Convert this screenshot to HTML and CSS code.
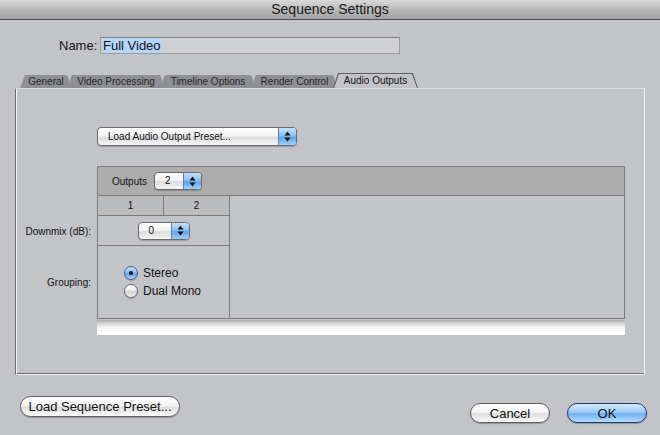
FILE: index.html
```html
<!DOCTYPE html>
<html lang="en">
<head>
  <meta charset="UTF-8">
  <title>Sequence Settings</title>
  <link rel="stylesheet" href="styles.css">
</head>
<body>

<div class="window">
  <div class="titlebar">Sequence Settings</div>

  <!-- Name field -->
  <div class="name-row">
    <label for="seq-name">Name:</label>
    <div class="textfield" id="seq-name"><span class="selected">Full Video</span></div>
  </div>

  <!-- Tabs -->
  <div class="tabs">
    <div class="tab tab-general">General</div>
    <div class="tab tab-video">Video Processing</div>
    <div class="tab tab-timeline">Timeline Options</div>
    <div class="tab tab-render">Render Control</div>
    <div class="tab tab-active"><span>Audio Outputs</span></div>
  </div>

  <div class="pane">
    <div class="popup popup-preset">
      <div class="popup-label">Load Audio Output Preset...</div>
      <div class="popup-arrows">
        <svg width="7" height="11" viewBox="0 0 7 11"><path d="M3.5 0.5L6.5 4.5H0.5Z M3.5 10.5L0.5 6.5H6.5Z" fill="#111"/></svg>
      </div>
    </div>

    <div class="mixer">
      <div class="row-labels">
        <div class="label-spacer"></div>
        <div class="row-label row-downmix">Downmix (dB):</div>
        <div class="row-label row-grouping">Grouping:</div>
      </div>

      <div class="mixer-table">
        <div class="mixer-head">
          <span>Outputs</span>
          <div class="popup popup-small">
            <div class="popup-label">2</div>
            <div class="popup-arrows">
              <svg width="7" height="11" viewBox="0 0 7 11"><path d="M3.5 0.5L6.5 4.5H0.5Z M3.5 10.5L0.5 6.5H6.5Z" fill="#111"/></svg>
            </div>
          </div>
        </div>
        <div class="mixer-body">
          <div class="cell col-head">1</div>
          <div class="cell col-head col-2">2</div>
          <div class="cell empty"></div>
          <div class="cell downmix">
            <div class="popup popup-small popup-db">
              <div class="popup-label">0</div>
              <div class="popup-arrows">
                <svg width="7" height="11" viewBox="0 0 7 11"><path d="M3.5 0.5L6.5 4.5H0.5Z M3.5 10.5L0.5 6.5H6.5Z" fill="#111"/></svg>
              </div>
            </div>
          </div>
          <div class="cell grouping">
            <div class="radio"><span class="radio-dot checked"></span>Stereo</div>
            <div class="radio"><span class="radio-dot"></span>Dual Mono</div>
          </div>
        </div>
      </div>
    </div>

    <div class="scroll-strip"></div>
  </div>

  <div class="footer">
    <button class="aqua btn-load">Load Sequence Preset...</button>
    <div class="footer-right">
      <button class="aqua btn-cancel">Cancel</button>
      <button class="aqua aqua-default btn-ok">OK</button>
    </div>
  </div>
</div>

</body>
</html>
```

FILE: styles.css
```css
body {
  margin: 0;
  padding: 0;
  font-family: "Liberation Sans", Arial, sans-serif;
  color: #111;
}
.window {
  width: 660px;
  height: 435px;
  background-color: #c3c4c8;
  overflow: hidden;
}
.titlebar {
  height: 19px;
  line-height: 19px;
  text-align: center;
  font-size: 14px;
  color: #1a1a1a;
  background: linear-gradient(#dadada, #b9b9b9 50%, #a3a3a3);
  border-bottom: 1px solid #4d4d4d;
}

/* Name row */
.name-row {
  display: flex;
  align-items: center;
  margin-top: 17px;
  padding-left: 59px;
  font-size: 13px;
}
.name-row label {
  width: 41px;
}
.textfield {
  width: 296px;
  height: 15px;
  line-height: 15px;
  padding-left: 2px;
  background-color: #cfd0d3;
  border: 1px solid #9c9c9c;
  border-top-color: #7e7e7e;
}
.selected {
  background-color: #b5d5fe;
}

/* Tabs */
.tabs {
  display: flex;
  align-items: flex-end;
  margin-top: 19px;
  padding-left: 20px;
  height: 15px;
}
.tab {
  height: 13px;
  line-height: 14px;
  margin-right: -5px;
  text-align: center;
  font-size: 10px;
  color: #262626;
  background-color: #8f9095;
  clip-path: polygon(5px 0, calc(100% - 5px) 0, 100% 100%, 0 100%);
}
.tab-general { width: 52px; }
.tab-video { width: 98px; }
.tab-timeline { width: 96px; }
.tab-render { width: 87px; }
.tab-active {
  position: relative;
  width: 85px;
  height: 15px;
  line-height: 15px;
  margin-right: 0;
  background-color: #5f5f5f;
  color: #111;
}
.tab-active::before {
  content: "";
  position: absolute;
  top: 1px;
  left: 1px;
  right: 1px;
  bottom: 0;
  background-color: #c3c4c8;
  clip-path: polygon(5px 0, calc(100% - 5px) 0, 100% 100%, 0 100%);
}
.tab-active span {
  position: relative;
}

/* Tab pane */
.pane {
  margin: 0 15px;
  height: 247px;
  padding: 38px 0 0 81px;
  border-top: 1px solid #dedfe2;
  border-left: 1px solid #6c6c6c;
  border-right: 1px solid #f4f4f4;
  border-bottom: 1px solid #f4f4f4;
  box-shadow: inset 1px 0 #f4f4f4, inset 0 -1px #6c6c6c;
}

/* Aqua popup menus */
.popup {
  display: flex;
  height: 16px;
  border: 1px solid #6b6b6b;
  border-radius: 4px;
  background: linear-gradient(#ffffff, #f2f2f2 45%, #dcdcdc 55%, #f6f6f6);
  box-shadow: 0 1px 1px rgba(0, 0, 0, 0.2);
  overflow: hidden;
  font-size: 10px;
}
.popup-label {
  flex: 1;
  line-height: 16px;
  padding-left: 10px;
}
.popup-arrows {
  width: 17px;
  display: flex;
  align-items: center;
  justify-content: center;
  border-left: 1px solid #5a7fb8;
  background: linear-gradient(#c6e1fb, #8cc0f2 45%, #5fa4e8 55%, #9fd0fa);
}
.popup-preset {
  width: 198px;
  height: 17px;
}
.popup-preset .popup-label {
  line-height: 17px;
}
.popup-small {
  width: 46px;
}
.popup-db {
  width: 50px;
}

/* Mixer table */
.mixer {
  display: flex;
  margin-top: 20px;
  margin-left: -81px;
}
.row-labels {
  width: 81px;
  font-size: 10px;
}
.label-spacer {
  height: 50px;
}
.row-label {
  display: flex;
  align-items: center;
  justify-content: flex-end;
  padding-right: 6px;
}
.row-downmix {
  height: 30px;
}
.row-grouping {
  height: 73px;
}
.mixer-table {
  width: 526px;
  border: 1px solid #7b7b7b;
}
.mixer-head {
  display: flex;
  align-items: center;
  gap: 7px;
  height: 28px;
  padding-left: 14px;
  font-size: 10px;
  background-color: #adadad;
  border-bottom: 1px solid #7b7b7b;
}
.mixer-body {
  display: grid;
  grid-template-columns: 65px 65px 1fr;
  grid-template-rows: 19px 29px 71px;
  gap: 1px;
  background-color: #7b7b7b;
}
.cell {
  background-color: #c3c4c8;
}
.col-head {
  background-color: #bbbcbe;
  font-size: 10px;
  line-height: 19px;
  text-align: center;
}
.empty {
  grid-column: 3;
  grid-row: 1 / 4;
}
.downmix {
  grid-column: 1 / 3;
  display: flex;
  align-items: center;
  justify-content: center;
}
.grouping {
  grid-column: 1 / 3;
  display: flex;
  flex-direction: column;
  justify-content: center;
  padding-left: 26px;
}
.radio {
  display: flex;
  align-items: center;
  height: 18px;
  font-size: 12px;
}
.radio-dot {
  width: 12px;
  height: 12px;
  margin-right: 5px;
  border: 1px solid #6b6b6b;
  border-radius: 50%;
  background: linear-gradient(#ffffff, #e9e9e9 50%, #d2d2d2 55%, #f4f4f4);
  box-shadow: 0 1px 1px rgba(0, 0, 0, 0.2);
  display: flex;
  align-items: center;
  justify-content: center;
}
.radio-dot.checked {
  border-color: #44619a;
  background: linear-gradient(#c9e3fb, #8cc0f2 45%, #5fa4e8 55%, #a6d4fb);
}
.radio-dot.checked::after {
  content: "";
  width: 4px;
  height: 4px;
  border-radius: 50%;
  background-color: #111;
}
.scroll-strip {
  width: 528px;
  height: 15px;
  margin-top: 1px;
  background: linear-gradient(#adadad, #d9d9d9 25%, #f5f5f5 50%, #ffffff);
}

/* Bottom buttons */
.footer {
  display: flex;
  justify-content: space-between;
  padding: 21px 13px 0 20px;
}
.footer-right {
  display: flex;
  gap: 17px;
  margin-top: 7px;
}
.aqua {
  height: 21px;
  padding: 0;
  font-family: "Liberation Sans", Arial, sans-serif;
  font-size: 13px;
  color: #111;
  border: 1px solid #5e5e5e;
  border-radius: 11px;
  background: linear-gradient(#ffffff, #f3f3f3 45%, #dedede 55%, #fafafa);
  box-shadow: 0 1px 1px rgba(0, 0, 0, 0.25);
}
.btn-load {
  width: 160px;
}
.btn-cancel, .btn-ok {
  width: 80px;
  height: 20px;
}
.aqua-default {
  border-color: #23357f;
  background: linear-gradient(#d3eafd, #9ccbf5 45%, #6eb1ee 55%, #b3dcfc);
}
```
